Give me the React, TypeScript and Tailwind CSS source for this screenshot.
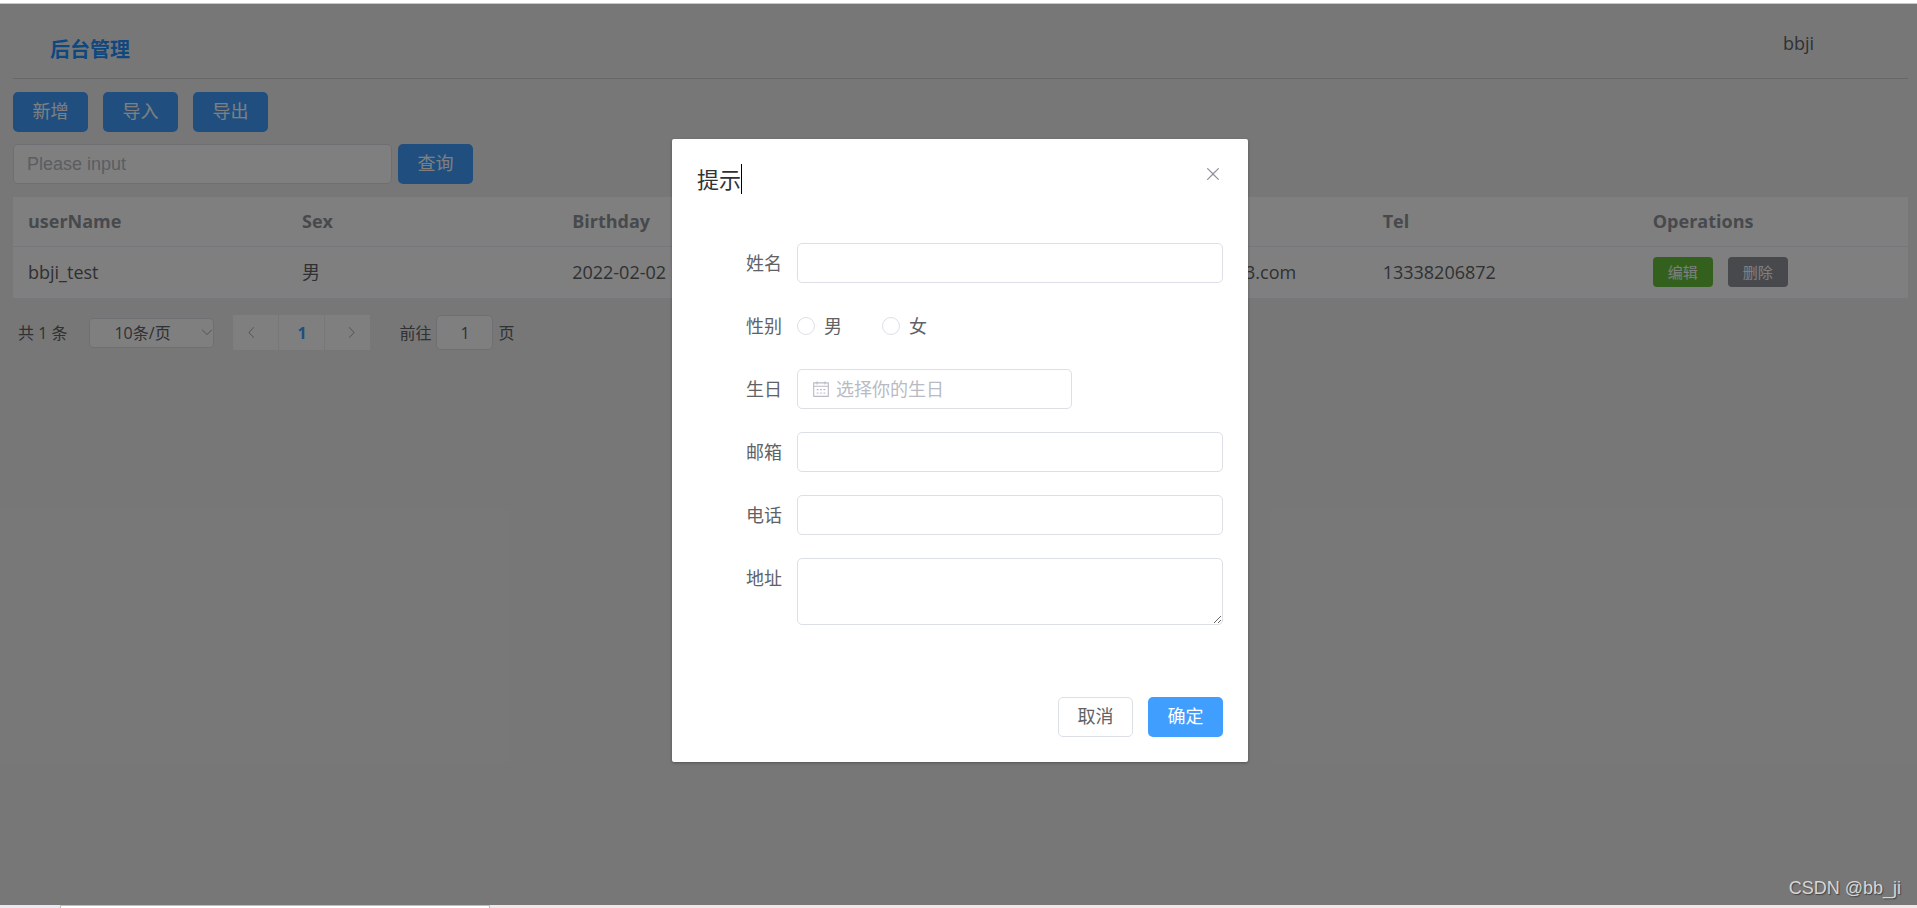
import React, { useState } from 'react'

const users = [
  {
    userName: 'bbji_test',
    sex: '男',
    birthday: '2022-02-02',
    address: '北京市',
    email: 'bbji_testcm@163.com',
    tel: '13338206872',
  },
]

const columns = ['userName', 'Sex', 'Birthday', 'Address', 'Email', 'Tel', 'Operations']

const primaryBtn = 'h-10 w-[75px] rounded-[5px] bg-[#409eff] pb-[3px] text-lg leading-none text-white'
const fieldBox = 'block rounded-[5px] border border-[#dcdfe6] bg-white text-lg text-[#606266] outline-none'

const Icon = ({ d, className }: { d: string; className: string }) => (
  <svg viewBox="0 0 1024 1024" fill="currentColor" className={className} aria-hidden="true">
    <path d={d} />
  </svg>
)

const closePath =
  'M764.288 214.592 512 466.88 259.712 214.592a31.936 31.936 0 0 0-45.12 45.12L466.752 512 214.528 764.224a31.936 31.936 0 1 0 45.12 45.184L512 557.184l252.288 252.288a31.936 31.936 0 0 0 45.12-45.12L557.12 512.064l252.288-252.352a31.936 31.936 0 1 0-45.12-45.184z'
const arrowPath =
  'M831.872 340.864 512 652.672 192.128 340.864a30.592 30.592 0 0 0-42.752 0 29.12 29.12 0 0 0 0 41.6L489.664 714.24a32 32 0 0 0 44.672 0l340.288-331.712a29.12 29.12 0 0 0 0-41.728 30.592 30.592 0 0 0-42.752 0z'
const calendarPath =
  'M128 384v512h768V192H768v32a32 32 0 1 1-64 0v-32H320v32a32 32 0 0 1-64 0v-32H128v128h768v64H128zm192-256h384V96a32 32 0 1 1 64 0v32h160a32 32 0 0 1 32 32v768a32 32 0 0 1-32 32H96a32 32 0 0 1-32-32V160a32 32 0 0 1 32-32h160V96a32 32 0 0 1 64 0v32zm-32 384h64a32 32 0 0 1 0 64h-64a32 32 0 0 1 0-64zm0 192h64a32 32 0 1 1 0 64h-64a32 32 0 1 1 0-64zm192-192h64a32 32 0 0 1 0 64h-64a32 32 0 0 1 0-64zm0 192h64a32 32 0 1 1 0 64h-64a32 32 0 1 1 0-64zm192-192h64a32 32 0 1 1 0 64h-64a32 32 0 1 1 0-64zm0 192h64a32 32 0 1 1 0 64h-64a32 32 0 1 1 0-64z'

const FormRow = ({ label, id, children }: { label: string; id?: string; children: React.ReactNode }) => (
  <div className="flex items-start">
    <label htmlFor={id} className="w-[100px] shrink-0 pr-[15px] text-right text-lg leading-10 text-[#606266]">
      {label}
    </label>
    <div className="min-w-0 flex-1">{children}</div>
  </div>
)

const Pagination = () => (
  <div className="flex h-9 items-center pl-[5px] text-base text-[#606266]">
    <span>共 1 条</span>

    <div className="relative ml-[22px]">
      <select
        aria-label="每页条数"
        className="block h-[30px] w-[125px] appearance-none rounded-[4px] border border-[#dcdfe6] bg-white pl-6 outline-none"
      >
        <option>10条/页</option>
      </select>
      <Icon d={arrowPath} className="pointer-events-none absolute top-[7px] right-0 size-[14px] text-[#a8abb2]" />
    </div>

    <div className="ml-[19px] flex gap-px">
      <button type="button" aria-label="上一页" className="flex h-[35px] w-[45px] items-center justify-center bg-white pr-2 text-[#a8abb2]">
        <Icon d={arrowPath} className="size-[15px] rotate-90" />
      </button>
      <button type="button" className="h-[35px] w-[45px] bg-white font-bold text-[#409eff]">1</button>
      <button type="button" aria-label="下一页" className="flex h-[35px] w-[45px] items-center justify-center bg-white pl-2 text-[#a8abb2]">
        <Icon d={arrowPath} className="size-[15px] -rotate-90" />
      </button>
    </div>

    <label htmlFor="page" className="ml-[29px]">前往</label>
    <input
      id="page"
      defaultValue="1"
      className="mx-[5px] h-[35px] w-[57px] rounded-[5px] border border-[#dcdfe6] bg-white text-center outline-none"
    />
    <span>页</span>
  </div>
)

const UserDialog = ({ onClose }: { onClose: () => void }) => (
  <div
    role="dialog"
    aria-labelledby="dialog-title"
    className="mt-[135px] w-[30%] min-w-[576px] rounded-[2px] bg-white p-[25px] shadow-[0_1px_3px_rgba(0,0,0,0.3)]"
  >
    <div className="flex items-start justify-between">
      <h2 id="dialog-title" className="border-r border-black text-[22px] leading-[30px] text-[#303133]">提示</h2>
      <button type="button" aria-label="关闭" onClick={onClose} className="text-[#909399]">
        <Icon d={closePath} className="size-5" />
      </button>
    </div>

    <form className="mt-[49px] flex flex-col gap-[23px]">
      <FormRow label="姓名" id="name">
        <input id="name" className={`${fieldBox} h-10 w-full px-[13px]`} />
      </FormRow>

      <FormRow label="性别">
        <div className="flex h-10 items-center gap-10 text-lg text-[#606266]">
          <label className="flex items-center gap-[9px]">
            <input type="radio" name="sex" className="size-[18px] appearance-none rounded-full border border-[#dcdfe6] bg-white" />
            男
          </label>
          <label className="flex items-center gap-[9px]">
            <input type="radio" name="sex" className="size-[18px] appearance-none rounded-full border border-[#dcdfe6] bg-white" />
            女
          </label>
        </div>
      </FormRow>

      <FormRow label="生日" id="birthday">
        <div className="relative w-[275px]">
          <input
            id="birthday"
            placeholder="选择你的生日"
            className={`${fieldBox} h-10 w-full pl-[38px] placeholder:text-[#b8bbc4]`}
          />
          <Icon d={calendarPath} className="absolute top-[11px] left-[15px] size-[18px] text-[#b8bbc4]" />
        </div>
      </FormRow>

      <FormRow label="邮箱" id="email">
        <input id="email" className={`${fieldBox} h-10 w-full px-[13px]`} />
      </FormRow>

      <FormRow label="电话" id="tel">
        <input id="tel" className={`${fieldBox} h-10 w-full px-[13px]`} />
      </FormRow>

      <FormRow label="地址" id="address">
        <textarea id="address" className={`${fieldBox} h-[67px] w-full resize-y px-[13px]`} />
      </FormRow>
    </form>

    <div className="mt-[72px] flex justify-end gap-[15px]">
      <button
        type="button"
        onClick={onClose}
        className="h-10 w-[75px] rounded-[5px] border border-[#dcdfe6] bg-white pb-[3px] text-lg leading-none text-[#606266]"
      >
        取消
      </button>
      <button type="button" className={primaryBtn}>确定</button>
    </div>
  </div>
)

const App = () => {
  const [open, setOpen] = useState(true)

  return (
    <div className="flex min-h-screen flex-col bg-white font-['Open_Sans','Noto_Sans_CJK_SC',sans-serif]">
      <div className="h-1 border-b border-[#c8c8c8]" />

      <main className="relative flex-1 bg-[#efefef] pr-[9px] pl-[13px]">
        <header className="flex h-[75px] items-start justify-between border-b border-[#cfcfcf] pr-[94px] pl-[37px]">
          <h1 className="pt-[31px] text-xl leading-[30px] font-bold text-[#1e90ff]">后台管理</h1>
          <span className="pt-[25px] text-lg text-[#606266]">bbji</span>
        </header>

        <div className="mt-[13px] flex gap-[15px]">
          <button type="button" onClick={() => setOpen(true)} className={primaryBtn}>新增</button>
          <button type="button" className={primaryBtn}>导入</button>
          <button type="button" className={primaryBtn}>导出</button>
        </div>

        <div className="mt-3 flex items-center gap-[6px]">
          <input
            aria-label="Please input"
            placeholder="Please input"
            className={`${fieldBox} h-10 w-[379px] px-[13px] font-['Liberation_Sans'] placeholder:text-[#b8bbc4]`}
          />
          <button type="button" className={primaryBtn}>查询</button>
        </div>

        <table className="mt-[13px] w-full table-fixed bg-white text-left text-lg">
          <thead>
            <tr className="h-[49px] border-b border-[#ebeef5] text-[#909399]">
              {columns.map((name) => (
                <th key={name} className="px-[15px] font-bold first:w-[274px]">{name}</th>
              ))}
            </tr>
          </thead>
          <tbody>
            {users.map((user) => (
              <tr key={user.userName} className="h-[52px] border-b border-[#ebeef5] text-[#606266]">
                <td className="px-[15px]">{user.userName}</td>
                <td className="px-[15px]">{user.sex}</td>
                <td className="px-[15px]">{user.birthday}</td>
                <td className="px-[15px]">{user.address}</td>
                <td className="px-[15px]">{user.email}</td>
                <td className="px-[15px]">{user.tel}</td>
                <td className="px-[15px]">
                  <div className="flex gap-[15px] text-[15px] leading-none text-white">
                    <button type="button" className="h-[30px] w-[60px] rounded-[4px] bg-[#67c23a]">编辑</button>
                    <button type="button" className="h-[30px] w-[60px] rounded-[4px] bg-[#909399]">删除</button>
                  </div>
                </td>
              </tr>
            ))}
          </tbody>
        </table>

        <div className="mt-4">
          <Pagination />
        </div>

        {open && (
          <div className="absolute inset-0 flex items-start justify-center bg-black/50 pl-[3px]">
            <UserDialog onClose={() => setOpen(false)} />
          </div>
        )}

        <span className="absolute right-4 bottom-[3px] font-['Liberation_Sans'] text-lg text-[#d6d6d6] [text-shadow:1px_1px_1px_#444]">
          CSDN @bb_ji
        </span>
      </main>

      <footer className="flex h-[3px] bg-[#f3e6e8]">
        <div className="w-[60px] bg-[#ece6f0]" />
        <div className="w-[430px] border-x border-t border-[#bdbdbd] bg-white" />
      </footer>
    </div>
  )
}

export default App
